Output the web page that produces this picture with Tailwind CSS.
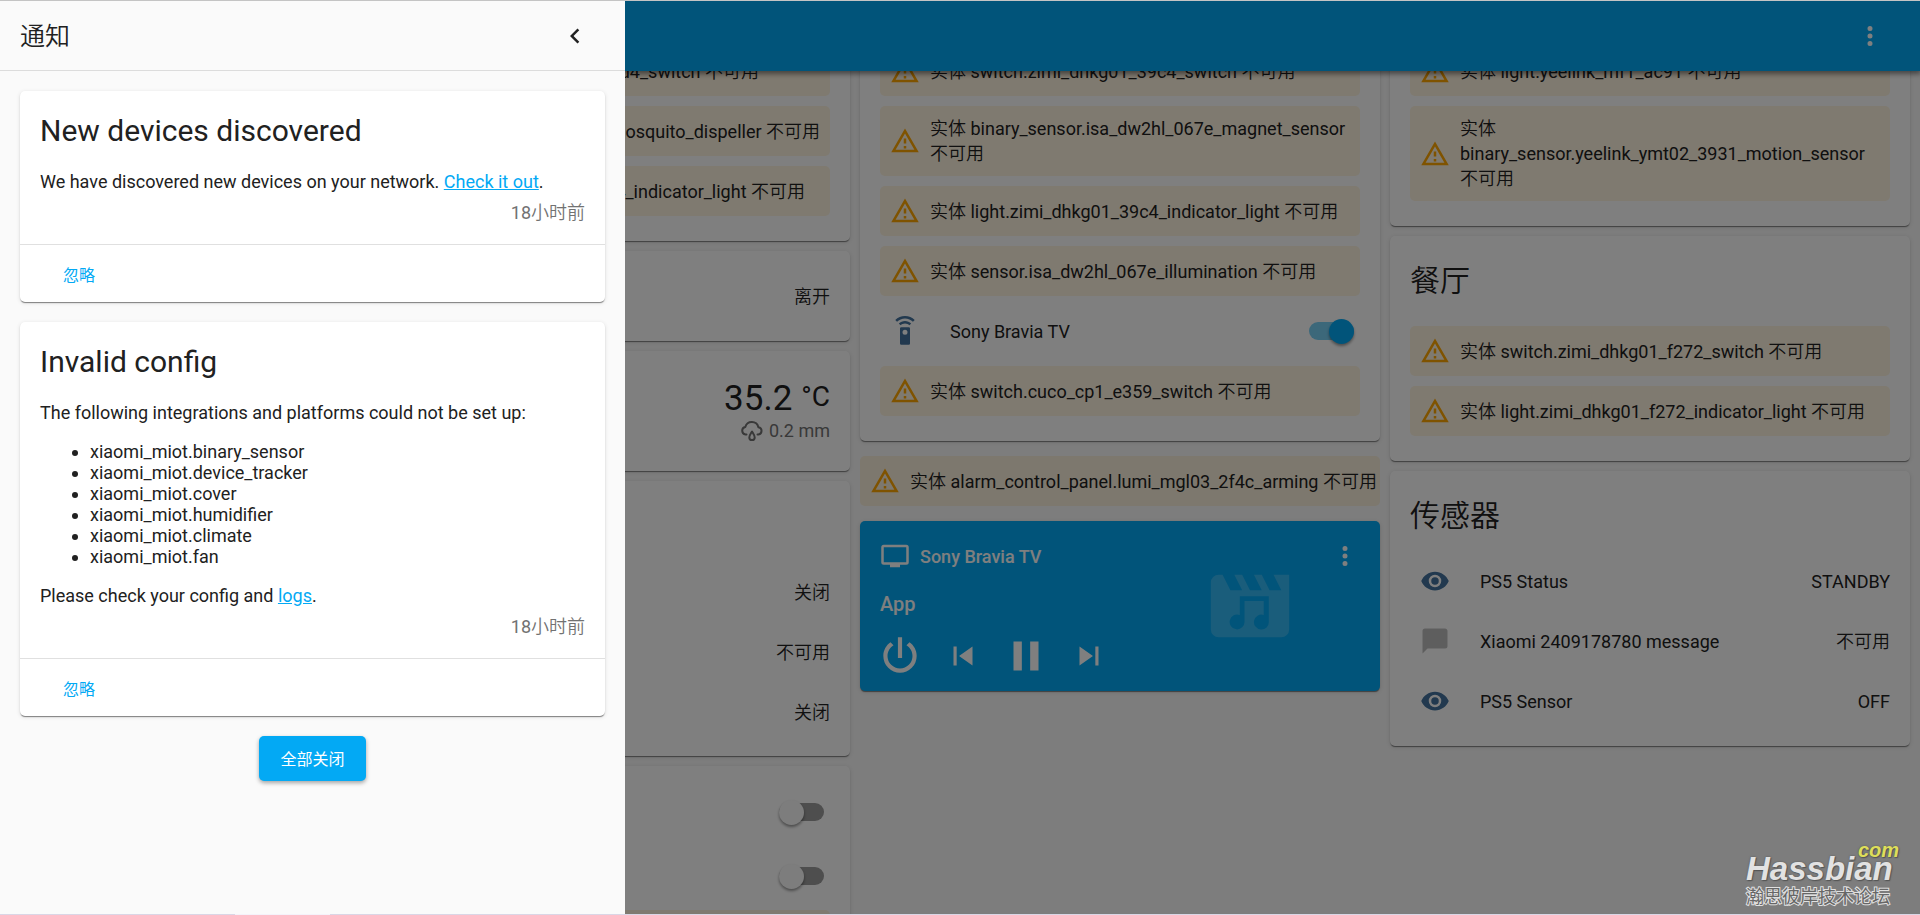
<!DOCTYPE html>
<html lang="zh-CN">
<head>
<meta charset="utf-8">
<meta name="viewport" content="width=device-width, initial-scale=1">
<title>Home Assistant</title>
<script src="https://cdn.jsdelivr.net/npm/@tailwindcss/browser@4"></script>
</head>
<body class="flex h-screen flex-col overflow-hidden bg-[#fafafa] font-['Roboto','Noto_Sans_CJK_SC_DemiLight','Noto_Sans_CJK_SC',sans-serif] text-[18px] leading-[21px] text-[#212121]">

<!-- Icon library -->
<svg class="hidden" aria-hidden="true">
  <symbol id="alert" viewBox="0 0 24 24"><path d="M12,2L1,21H23M12,6L19.53,19H4.47M11,10V14H13V10M11,16V18H13V16"/></symbol>
  <symbol id="dots" viewBox="0 0 24 24"><path d="M12,16A2,2 0 0,1 14,18A2,2 0 0,1 12,20A2,2 0 0,1 10,18A2,2 0 0,1 12,16M12,10A2,2 0 0,1 14,12A2,2 0 0,1 12,14A2,2 0 0,1 10,12A2,2 0 0,1 12,10M12,4A2,2 0 0,1 14,6A2,2 0 0,1 12,8A2,2 0 0,1 10,6A2,2 0 0,1 12,4Z"/></symbol>
  <symbol id="eye" viewBox="0 0 24 24"><path d="M12,9A3,3 0 0,0 9,12A3,3 0 0,0 12,15A3,3 0 0,0 15,12A3,3 0 0,0 12,9M12,17A5,5 0 0,1 7,12A5,5 0 0,1 12,7A5,5 0 0,1 17,12A5,5 0 0,1 12,17M12,4.5C7,4.5 2.73,7.61 1,12C2.73,16.39 7,19.5 12,19.5C17,19.5 21.27,16.39 23,12C21.27,7.61 17,4.5 12,4.5Z"/></symbol>
</svg>

<div class="h-px shrink-0 bg-[#c4c4c4]"></div>

<div class="relative flex min-h-0 flex-1 flex-col overflow-hidden">

  <!-- App bar -->
  <header class="relative z-10 flex h-[70px] shrink-0 items-center justify-end bg-[#03a9f4] px-[35px] text-white shadow-[0_2px_5px_1px_rgba(0,0,0,0.45)]">
    <button type="button" aria-label="菜单" class="size-[30px]"><svg class="size-[30px] fill-current"><use href="#dots"/></svg></button>
  </header>

  <!-- Dashboard, scrolled so the first cards start above the app bar -->
  <main class="-mt-[50px] grid min-h-0 flex-1 grid-cols-3 items-start gap-[10px] pr-[10px] pl-[330px]">

    <section class="flex flex-col gap-[10px]">
      <article class="flex flex-col gap-[10px] rounded-[5px] bg-white px-[20px] pt-[25px] pb-[25px] shadow-[0_2px_1px_-1px_rgba(0,0,0,0.3),0_1px_1px_0_rgba(0,0,0,0.2),0_1px_4px_0_rgba(0,0,0,0.12)]">
        <p class="flex h-[50px] items-center justify-end rounded-[5px] bg-[#ffa600]/12 pr-[71px] whitespace-nowrap">d4_switch 不可用</p>
        <p class="flex h-[50px] items-center justify-end rounded-[5px] bg-[#ffa600]/12 pr-[10px] whitespace-nowrap">mosquito_dispeller 不可用</p>
        <p class="flex h-[50px] items-center justify-end rounded-[5px] bg-[#ffa600]/12 pr-[25px] whitespace-nowrap">4_indicator_light 不可用</p>
      </article>

      <article class="flex h-[90px] items-center justify-end rounded-[5px] bg-white px-[20px] shadow-[0_2px_1px_-1px_rgba(0,0,0,0.3),0_1px_1px_0_rgba(0,0,0,0.2),0_1px_4px_0_rgba(0,0,0,0.12)]">离开</article>

      <article class="flex h-[120px] flex-col items-end rounded-[5px] bg-white px-[20px] pt-[28px] shadow-[0_2px_1px_-1px_rgba(0,0,0,0.3),0_1px_1px_0_rgba(0,0,0,0.2),0_1px_4px_0_rgba(0,0,0,0.12)]">
        <p class="flex items-start gap-[9px] text-[35px] leading-[40px]">35.2 <span class="text-[28px] leading-[36px]">°C</span></p>
        <p class="flex items-center gap-[5px] text-[#727272] leading-[24px]">
          <svg class="size-[24px] fill-none stroke-current" viewBox="0 0 24 24" stroke-width="2" stroke-linecap="round" stroke-linejoin="round" aria-hidden="true"><path d="M6.500 15.500H5.500A3.800 3.800 0 0 1 5.300 8A6.800 6.800 0 0 1 18.400 8.200A3.700 3.700 0 0 1 18.500 15.500H17.500M12 12.500C11 14.200 9.300 16.400 9.300 18.400A2.700 2.700 0 0 0 14.700 18.400C14.700 16.400 13 14.200 12 12.500Z"/></svg>
          0.2 mm</p>
      </article>

      <article class="flex flex-col gap-[10px] rounded-[5px] bg-white px-[20px] pt-[86px] pb-[19px] shadow-[0_2px_1px_-1px_rgba(0,0,0,0.3),0_1px_1px_0_rgba(0,0,0,0.2),0_1px_4px_0_rgba(0,0,0,0.12)]">
        <p class="flex h-[50px] items-center justify-end">关闭</p>
        <p class="flex h-[50px] items-center justify-end">不可用</p>
        <p class="flex h-[50px] items-center justify-end">关闭</p>
      </article>

      <article class="rounded-[5px] bg-white px-[20px] pt-[14px] pb-[25px] shadow-[0_2px_1px_-1px_rgba(0,0,0,0.3),0_1px_1px_0_rgba(0,0,0,0.2),0_1px_4px_0_rgba(0,0,0,0.12)]">
        <div class="flex h-[64px] items-center justify-end pr-[6px]">
          <input type="checkbox" aria-label="开关 1" class="flex h-[18px] w-[45px] appearance-none items-center rounded-full bg-[#9c9c9c] before:size-[25px] before:shrink-0 before:rounded-full before:bg-[#fafafa] before:shadow-[0_2px_3px_rgba(0,0,0,0.4)]">
        </div>
        <div class="flex h-[64px] items-center justify-end pr-[6px]">
          <input type="checkbox" aria-label="开关 2" class="flex h-[18px] w-[45px] appearance-none items-center rounded-full bg-[#9c9c9c] before:size-[25px] before:shrink-0 before:rounded-full before:bg-[#fafafa] before:shadow-[0_2px_3px_rgba(0,0,0,0.4)]">
        </div>
        <div class="mt-[2px] h-[50px] rounded-[5px] bg-[#ffa600]/12"></div>
      </article>
    </section>

    <section class="flex flex-col gap-[15px]">
      <article class="flex flex-col gap-[10px] rounded-[5px] bg-white px-[20px] pt-[25px] pb-[25px] shadow-[0_2px_1px_-1px_rgba(0,0,0,0.3),0_1px_1px_0_rgba(0,0,0,0.2),0_1px_4px_0_rgba(0,0,0,0.12)]">
        <div class="flex min-h-[50px] items-center gap-[10px] rounded-[5px] bg-[#ffa600]/12 p-[10px] leading-[25px]"><svg class="size-[30px] shrink-0 fill-[#ffa600]"><use href="#alert"/></svg><p>实体 switch.zimi_dhkg01_39c4_switch 不可用</p></div>
        <div class="flex min-h-[50px] items-center gap-[10px] rounded-[5px] bg-[#ffa600]/12 p-[10px] leading-[25px]"><svg class="size-[30px] shrink-0 fill-[#ffa600]"><use href="#alert"/></svg><p>实体 binary_sensor.isa_dw2hl_067e_magnet_sensor<br>不可用</p></div>
        <div class="flex min-h-[50px] items-center gap-[10px] rounded-[5px] bg-[#ffa600]/12 p-[10px] leading-[25px]"><svg class="size-[30px] shrink-0 fill-[#ffa600]"><use href="#alert"/></svg><p>实体 light.zimi_dhkg01_39c4_indicator_light 不可用</p></div>
        <div class="flex min-h-[50px] items-center gap-[10px] rounded-[5px] bg-[#ffa600]/12 p-[10px] leading-[25px]"><svg class="size-[30px] shrink-0 fill-[#ffa600]"><use href="#alert"/></svg><p>实体 sensor.isa_dw2hl_067e_illumination 不可用</p></div>
        <div class="flex h-[50px] items-center gap-[20px] pr-[6px]">
          <span class="flex w-[50px] justify-center"><svg class="size-[30px] fill-[#44739e]" viewBox="0 0 24 24" aria-hidden="true"><path d="M12,0C8.96,0 6.21,1.23 4.22,3.22L5.63,4.63C7.26,3 9.5,2 12,2C14.5,2 16.74,3 18.36,4.64L19.77,3.23C17.79,1.23 15.04,0 12,0M7.05,6.05L8.46,7.46C9.37,6.56 10.62,6 12,6C13.38,6 14.63,6.56 15.54,7.46L16.95,6.05C15.68,4.78 13.93,4 12,4C10.07,4 8.32,4.78 7.05,6.05M12,15A2,2 0 0,1 10,13A2,2 0 0,1 12,11A2,2 0 0,1 14,13A2,2 0 0,1 12,15M15,9H9A1,1 0 0,0 8,10V22A1,1 0 0,0 9,23H15A1,1 0 0,0 16,22V10A1,1 0 0,0 15,9Z"/></svg></span>
          <label for="bravia" class="flex-1">Sony Bravia TV</label>
          <input id="bravia" type="checkbox" checked class="flex h-[18px] w-[45px] appearance-none items-center justify-end rounded-full bg-[#78d0f5] before:size-[25px] before:shrink-0 before:rounded-full before:bg-[#03a9f4] before:shadow-[0_2px_3px_rgba(0,0,0,0.4)]">
        </div>
        <div class="flex min-h-[50px] items-center gap-[10px] rounded-[5px] bg-[#ffa600]/12 p-[10px] leading-[25px]"><svg class="size-[30px] shrink-0 fill-[#ffa600]"><use href="#alert"/></svg><p>实体 switch.cuco_cp1_e359_switch 不可用</p></div>
      </article>

      <div class="flex min-h-[50px] items-center gap-[10px] rounded-[5px] bg-[#ffa600]/12 p-[10px] leading-[25px]"><svg class="size-[30px] shrink-0 fill-[#ffa600]"><use href="#alert"/></svg><p class="whitespace-nowrap">实体 alarm_control_panel.lumi_mgl03_2f4c_arming 不可用</p></div>

      <!-- Media player -->
      <article class="relative h-[170px] rounded-[5px] bg-[#03a9f4] px-[20px] pt-[20px] font-medium text-white shadow-[0_2px_1px_-1px_rgba(0,0,0,0.3),0_1px_1px_0_rgba(0,0,0,0.2),0_1px_4px_0_rgba(0,0,0,0.12)]">
        <svg class="absolute top-[38px] right-[83px] size-[94px] fill-white/20" viewBox="0 0 24 24" aria-hidden="true"><path fill-rule="evenodd" d="M18,4L20,8H17L15,4H13L15,8H12L10,4H8L10,8H7L5,4H4A2,2 0 0,0 2,6V18A2,2 0 0,0 4,20H20A2,2 0 0,0 22,18V4H18ZM9.4 9.5H16.800V16A1.900 1.900 0 1 1 15.500 14.300V10.700H10.600V16A1.900 1.900 0 1 1 9.400 14.300Z"/></svg>
        <div class="flex h-[30px] items-center gap-[10px]">
          <svg class="size-[30px] fill-current" viewBox="0 0 24 24" aria-hidden="true"><path d="M21,17H3V5H21M21,3H3A2,2 0 0,0 1,5V17A2,2 0 0,0 3,19H8V21H16V19H21A2,2 0 0,0 23,17V5A2,2 0 0,0 21,3Z"/></svg>
          <span class="flex-1">Sony Bravia TV</span>
          <button type="button" aria-label="更多信息" class="size-[30px]"><svg class="size-[30px] fill-current"><use href="#dots"/></svg></button>
        </div>
        <p class="mt-[21px] text-[20px] leading-[24px]">App</p>
        <div class="-ml-[5px] mt-[15px] flex gap-[13px]">
          <button type="button" aria-label="电源" class="flex size-[50px] items-center justify-center"><svg class="size-[50px] fill-current" viewBox="0 0 24 24"><path d="M16.56,5.44L15.11,6.89C16.84,7.94 18,9.83 18,12A6,6 0 0,1 12,18A6,6 0 0,1 6,12C6,9.83 7.16,7.94 8.88,6.88L7.44,5.44C5.36,6.88 4,9.28 4,12A8,8 0 0,0 12,20A8,8 0 0,0 20,12C20,9.28 18.64,6.88 16.56,5.44M13,3H11V13H13"/></svg></button>
          <button type="button" aria-label="上一曲" class="flex size-[50px] items-center justify-center"><svg class="size-[38px] fill-current" viewBox="0 0 24 24"><path d="M6,18V6H8V18H6M9.5,12L18,6V18L9.5,12Z"/></svg></button>
          <button type="button" aria-label="暂停" class="flex size-[50px] items-center justify-center"><svg class="size-[50px] fill-current" viewBox="0 0 24 24"><path d="M14,19H18V5H14M6,19H10V5H6V19Z"/></svg></button>
          <button type="button" aria-label="下一曲" class="flex size-[50px] items-center justify-center"><svg class="size-[38px] fill-current" viewBox="0 0 24 24"><path d="M16,18H18V6H16M6,18L14.500,12L6,6V18Z"/></svg></button>
        </div>
      </article>
    </section>

    <section class="flex flex-col gap-[10px]">
      <article class="flex flex-col gap-[10px] rounded-[5px] bg-white px-[20px] pt-[25px] pb-[25px] shadow-[0_2px_1px_-1px_rgba(0,0,0,0.3),0_1px_1px_0_rgba(0,0,0,0.2),0_1px_4px_0_rgba(0,0,0,0.12)]">
        <div class="flex min-h-[50px] items-center gap-[10px] rounded-[5px] bg-[#ffa600]/12 p-[10px] leading-[25px]"><svg class="size-[30px] shrink-0 fill-[#ffa600]"><use href="#alert"/></svg><p>实体 light.yeelink_mf1_ac91 不可用</p></div>
        <div class="flex min-h-[50px] items-center gap-[10px] rounded-[5px] bg-[#ffa600]/12 p-[10px] leading-[25px]"><svg class="size-[30px] shrink-0 fill-[#ffa600]"><use href="#alert"/></svg><p>实体<br>binary_sensor.yeelink_ymt02_3931_motion_sensor<br>不可用</p></div>
      </article>

      <article class="flex flex-col gap-[10px] rounded-[5px] bg-white px-[20px] pt-[15px] pb-[25px] shadow-[0_2px_1px_-1px_rgba(0,0,0,0.3),0_1px_1px_0_rgba(0,0,0,0.2),0_1px_4px_0_rgba(0,0,0,0.12)]">
        <h2 class="mb-[5px] text-[30px] leading-[60px]">餐厅</h2>
        <div class="flex min-h-[50px] items-center gap-[10px] rounded-[5px] bg-[#ffa600]/12 p-[10px] leading-[25px]"><svg class="size-[30px] shrink-0 fill-[#ffa600]"><use href="#alert"/></svg><p>实体 switch.zimi_dhkg01_f272_switch 不可用</p></div>
        <div class="flex min-h-[50px] items-center gap-[10px] rounded-[5px] bg-[#ffa600]/12 p-[10px] leading-[25px]"><svg class="size-[30px] shrink-0 fill-[#ffa600]"><use href="#alert"/></svg><p>实体 light.zimi_dhkg01_f272_indicator_light 不可用</p></div>
      </article>

      <article class="flex flex-col gap-[10px] rounded-[5px] bg-white px-[20px] pt-[15px] pb-[20px] shadow-[0_2px_1px_-1px_rgba(0,0,0,0.3),0_1px_1px_0_rgba(0,0,0,0.2),0_1px_4px_0_rgba(0,0,0,0.12)]">
        <h2 class="text-[30px] leading-[60px]">传感器</h2>
        <div class="flex h-[50px] items-center gap-[20px]">
          <span class="flex w-[50px] justify-center"><svg class="size-[30px] fill-[#44739e]"><use href="#eye"/></svg></span>
          <span class="flex-1">PS5 Status</span><span>STANDBY</span>
        </div>
        <div class="flex h-[50px] items-center gap-[20px]">
          <span class="flex w-[50px] justify-center"><svg class="size-[30px] fill-[#bdbdbd]" viewBox="0 0 24 24" aria-hidden="true"><path d="M20,2H4A2,2 0 0,0 2,4V22L6,18H20A2,2 0 0,0 22,16V4C22,2.89 21.1,2 20,2Z"/></svg></span>
          <span class="flex-1">Xiaomi 2409178780 message</span><span>不可用</span>
        </div>
        <div class="flex h-[50px] items-center gap-[20px]">
          <span class="flex w-[50px] justify-center"><svg class="size-[30px] fill-[#44739e]"><use href="#eye"/></svg></span>
          <span class="flex-1">PS5 Sensor</span><span>OFF</span>
        </div>
      </article>
    </section>
  </main>

  <!-- Scrim -->
  <div class="absolute inset-0 z-20 bg-black/50"></div>

  <!-- Notification drawer -->
  <aside class="absolute inset-y-0 left-0 z-30 flex w-[625px] flex-col bg-[#fafafa]">
    <header class="flex h-[70px] shrink-0 items-center justify-between border-b border-[#dcdcdc] pr-[35px] pl-[20px]">
      <h1 class="pt-[2px] text-[25px] leading-[30px]">通知</h1>
      <button type="button" aria-label="关闭" class="size-[30px]"><svg class="size-[30px] fill-current" viewBox="0 0 24 24"><path d="M15.41,16.58L10.83,12L15.41,7.41L14,6L8,12L14,18L15.41,16.58Z"/></svg></button>
    </header>
    <div class="flex flex-col items-center gap-[20px] p-[20px]">
      <article class="w-full rounded-[5px] bg-white shadow-[0_2px_1px_-1px_rgba(0,0,0,0.3),0_1px_1px_0_rgba(0,0,0,0.2),0_1px_4px_0_rgba(0,0,0,0.12)]">
        <div class="px-[20px] pt-[20px] pb-[20px]">
          <h2 class="text-[30px] leading-[40px]">New devices discovered</h2>
          <p class="mt-[20px]">We have discovered new devices on your network. <a href="#" class="text-[#03a9f4] underline">Check it out</a>.</p>
          <p class="mt-[10px] text-right leading-[22px] text-[#727272]">18小时前</p>
        </div>
        <div class="flex h-[58px] items-center border-t border-[#e0e0e0] pt-[2px] pl-[43px]">
          <button type="button" class="font-['Noto_Sans_CJK_SC',sans-serif] text-[16px] text-[#03a9f4]">忽略</button>
        </div>
      </article>

      <article class="w-full rounded-[5px] bg-white shadow-[0_2px_1px_-1px_rgba(0,0,0,0.3),0_1px_1px_0_rgba(0,0,0,0.2),0_1px_4px_0_rgba(0,0,0,0.12)]">
        <div class="px-[20px] pt-[20px] pb-[20px]">
          <h2 class="text-[30px] leading-[40px]">Invalid config</h2>
          <p class="mt-[20px]">The following integrations and platforms could not be set up:</p>
          <ul class="mt-[18px] list-disc pl-[50px]">
            <li>xiaomi_miot.binary_sensor</li>
            <li>xiaomi_miot.device_tracker</li>
            <li>xiaomi_miot.cover</li>
            <li>xiaomi_miot.humidifier</li>
            <li>xiaomi_miot.climate</li>
            <li>xiaomi_miot.fan</li>
          </ul>
          <p class="mt-[18px]">Please check your config and <a href="#" class="text-[#03a9f4] underline">logs</a>.</p>
          <p class="mt-[10px] text-right leading-[22px] text-[#727272]">18小时前</p>
        </div>
        <div class="flex h-[58px] items-center border-t border-[#e0e0e0] pt-[2px] pl-[43px]">
          <button type="button" class="font-['Noto_Sans_CJK_SC',sans-serif] text-[16px] text-[#03a9f4]">忽略</button>
        </div>
      </article>

      <button type="button" class="h-[45px] rounded-[5px] bg-[#03a9f4] px-[21px] font-['Noto_Sans_CJK_SC',sans-serif] text-[16px] text-white shadow-[0_2px_4px_rgba(0,0,0,0.35)]">全部关闭</button>
    </div>
  </aside>

  <!-- Forum watermark -->
  <div class="absolute right-[20px] bottom-[7px] z-40 flex w-[154px] flex-col font-['Liberation_Sans','Noto_Sans_CJK_SC',sans-serif] font-bold">
    <p class="-mb-[9px] self-end pr-[1px] text-[20px] leading-[20px] text-[#dede5a] italic [text-shadow:0_0_2px_#555,1px_1px_1px_#555]">com</p>
    <p class="text-[33px] leading-[36px] text-[#e2e2e2] italic [text-shadow:0_0_2px_#555,1px_1px_1px_#555]">Hassbian</p>
    <p class="text-[18px] leading-[20px] font-normal whitespace-nowrap text-[#666] [-webkit-text-stroke:2px_#e0e0e0] [paint-order:stroke_fill]">瀚思彼岸技术论坛</p>
  </div>
</div>

<div class="flex h-px shrink-0 bg-[#dad6e6]"><div class="ml-[235px] w-[95px] bg-[#f4f2fa]"></div></div>
</body>
</html>
